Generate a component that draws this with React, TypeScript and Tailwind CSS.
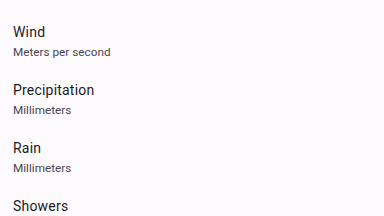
const items = [
  { title: 'Wind', unit: 'Meters per second' },
  { title: 'Precipitation', unit: 'Millimeters' },
  { title: 'Rain', unit: 'Millimeters' },
  { title: 'Showers', unit: 'Millimeters' },
];

export default function App() {
  return (
    <div
      className="h-[216px] w-[384px] overflow-hidden bg-[#fdfbfe] pt-[12px]"
      style={{ fontFamily: 'Roboto, sans-serif' }}
    >
      {items.map((item) => (
        <div key={item.title} className="flex h-[58px] flex-col justify-center gap-[3px] px-[13px]">
          <p className="text-[14px] leading-[18px] tracking-[0.2px] text-[#1c1b1f]">{item.title}</p>
          <p className="text-[11.75px] leading-[16px] text-[#49454f]">{item.unit}</p>
        </div>
      ))}
    </div>
  );
}
